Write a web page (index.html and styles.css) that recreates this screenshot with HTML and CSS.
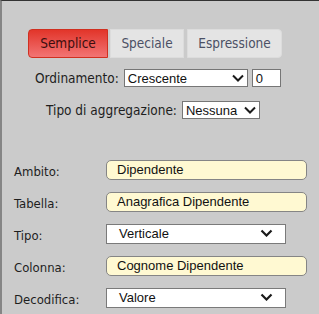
FILE: index.html
```html
<!DOCTYPE html>
<html>
<head>
<meta charset="utf-8">
<link rel="stylesheet" href="styles.css">
</head>
<body>
<div class="panel">
  <div class="tabs">
    <div class="tab active">Semplice</div>
    <div class="tab mid">Speciale</div>
    <div class="tab last">Espressione</div>
  </div>
  <div class="row row-order">
    <span class="lbl">Ordinamento:</span>
    <div class="select sel-order"><span>Crescente</span><svg class="chev" width="12" height="8" viewBox="0 0 12 8"><path d="M1 1.5 L6 6.5 L11 1.5" fill="none" stroke="#1a1a1a" stroke-width="2"/></svg></div>
    <div class="num">0</div>
  </div>
  <div class="row row-agg">
    <span class="lbl">Tipo di aggregazione:</span>
    <div class="select sel-agg"><span>Nessuna</span><svg class="chev" width="12" height="8" viewBox="0 0 12 8"><path d="M1 1.5 L6 6.5 L11 1.5" fill="none" stroke="#1a1a1a" stroke-width="2"/></svg></div>
  </div>
  <div class="form">
    <span class="flbl">Ambito:</span>
    <div class="field">Dipendente</div>
    <span class="flbl">Tabella:</span>
    <div class="field">Anagrafica Dipendente</div>
    <span class="flbl">Tipo:</span>
    <div class="fselect"><span>Verticale</span><svg class="chev" width="13" height="8" viewBox="0 0 13 8"><path d="M1.5 1.5 L6.5 6.5 L11.5 1.5" fill="none" stroke="#1a1a1a" stroke-width="2.2"/></svg></div>
    <span class="flbl">Colonna:</span>
    <div class="field">Cognome Dipendente</div>
    <span class="flbl">Decodifica:</span>
    <div class="fselect"><span>Valore</span><svg class="chev" width="13" height="8" viewBox="0 0 13 8"><path d="M1.5 1.5 L6.5 6.5 L11.5 1.5" fill="none" stroke="#1a1a1a" stroke-width="2.2"/></svg></div>
  </div>
</div>
</body>
</html>
```
FILE: styles.css
```css
html, body {
  margin: 0;
  padding: 0;
  background: #cbcbcb;
}
.panel {
  box-sizing: border-box;
  height: 314px;
  border-top: 1px solid #333;
  border-left: 2px solid #858585;
  background: #cbcbcb;
  font-family: "DejaVu Sans Condensed", "DejaVu Sans", sans-serif;
  font-size: 13.5px;
  color: #1e1e1e;
}
.tabs {
  display: flex;
  margin: 28px 0 0 26px;
  height: 29px;
}
.tab {
  box-sizing: border-box;
  height: 29px;
  line-height: 27px;
  text-align: center;
  background: #e4e4e4;
  border: 1px solid #dcdcdc;
  color: #4b5064;
}
.tab.active {
  width: 80px;
  background: linear-gradient(#e2352a, #f27474);
  border-color: #d03020;
  border-radius: 4px 0 0 4px;
  color: #3a0f0f;
}
.tab.mid {
  width: 74px;
  margin-left: 2px;
}
.tab.last {
  width: 95px;
  margin-left: 3px;
  border-radius: 0 4px 4px 0;
}
.row {
  display: flex;
  align-items: center;
  height: 18px;
}
.row-order {
  margin: 11px 0 0 33px;
}
.row-agg {
  margin: 14px 0 0 44px;
}
.lbl {
  margin-right: 5px;
}
.select, .num {
  box-sizing: border-box;
  height: 18px;
  background: #fff;
  border: 1px solid #767676;
  font-family: "Liberation Sans", Arial, sans-serif;
  font-size: 13px;
  color: #111;
  display: flex;
  align-items: center;
}
.select {
  justify-content: space-between;
  padding: 0 3px 0 3px;
}
.sel-order { width: 124px; }
.sel-agg { width: 78px; }
.num {
  width: 29px;
  margin-left: 4px;
  padding-left: 3px;
}
.form {
  display: grid;
  grid-template-columns: 92px 201px;
  row-gap: 12px;
  margin: 41px 0 0 12px;
  align-items: center;
  font-size: 13px;
}
.flbl {
  padding-top: 3px;
}
.field, .fselect {
  box-sizing: border-box;
  height: 20px;
  font-family: "Liberation Sans", Arial, sans-serif;
  font-size: 13px;
  color: #111;
  display: flex;
  align-items: center;
  padding-bottom: 2px;
}
.field {
  width: 201px;
  background: #fff9d2;
  border: 1px solid #858585;
  border-radius: 5px;
  padding-left: 10px;
}
.fselect {
  width: 180px;
  background: #fff;
  border: 1px solid #7a7a7a;
  padding-left: 12px;
  padding-right: 12px;
  justify-content: space-between;
}
.chev {
  display: block;
}
```
